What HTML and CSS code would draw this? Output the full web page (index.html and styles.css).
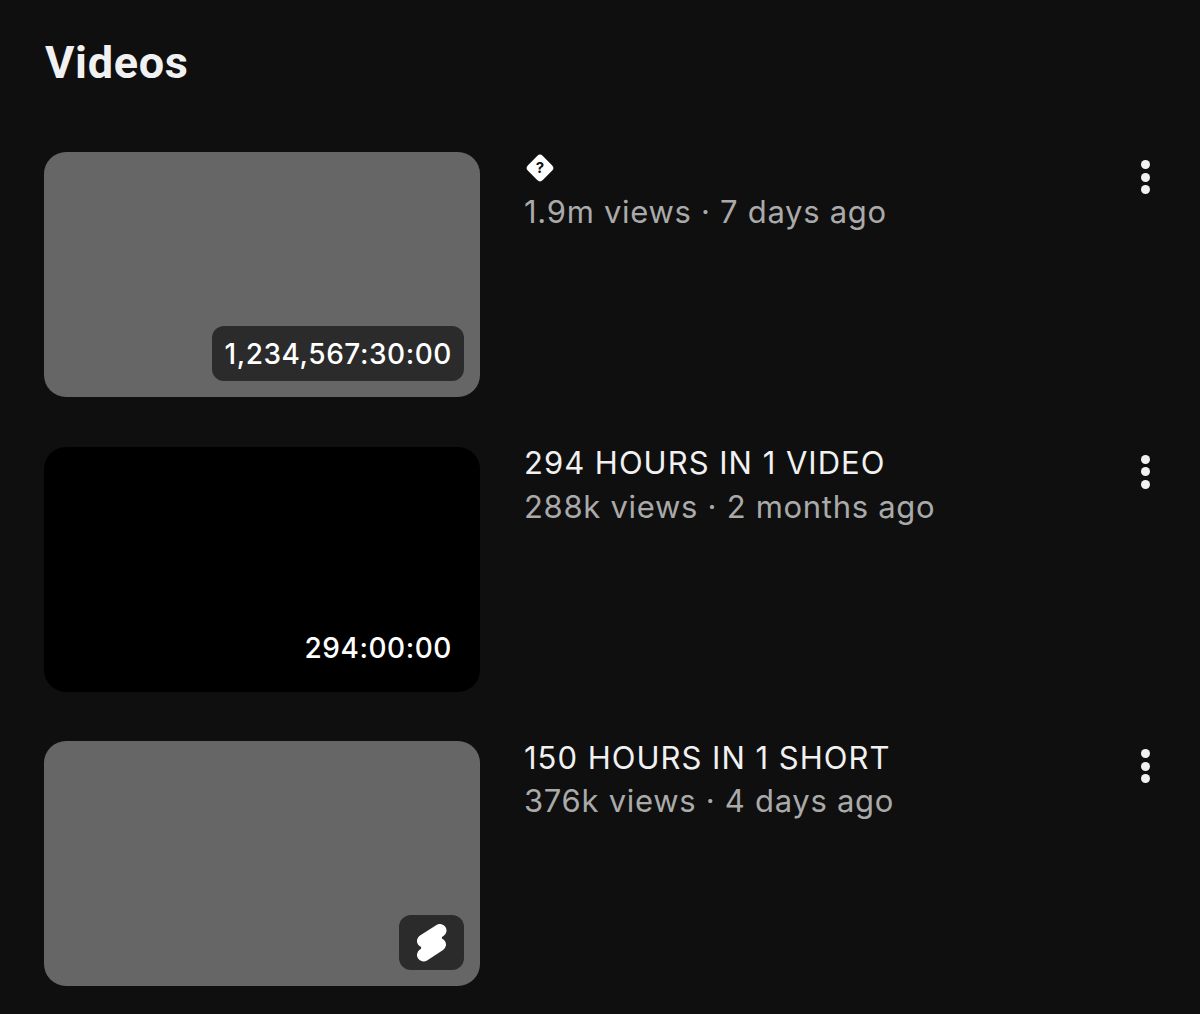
FILE: index.html
```html
<!DOCTYPE html>
<html lang="en">

<head>
    <meta charset="UTF-8">
    <meta name="viewport" content="width=device-width, initial-scale=1.0">
    <title>Videos</title>
    <link rel="stylesheet" href="styles.css">
</head>

<body>

    <h2 class="section-title">Videos</h2>

    <div class="video-list">
        <div class="video-row">
            <div class="thumb">
                <span class="badge">1,234,567:30:00</span>
            </div>
            <div class="video-info">
                <div class="video-title">
                    <svg class="unknown-icon" width="32" height="32" viewBox="0 0 32 32">
                        <rect x="5.5" y="5.5" width="21" height="21" rx="4" transform="rotate(45 16 16)" fill="#fff" />
                        <text x="16" y="21" text-anchor="middle" class="unknown-mark">?</text>
                    </svg>
                </div>
                <div class="video-meta">1.9m views · 7 days ago</div>
            </div>
            <div class="more"><span></span><span></span><span></span></div>
        </div>

        <div class="video-row">
            <div class="thumb thumb-black">
                <span class="badge badge-plain">294:00:00</span>
            </div>
            <div class="video-info">
                <div class="video-title">294 HOURS IN 1 VIDEO</div>
                <div class="video-meta">288k views · 2 months ago</div>
            </div>
            <div class="more"><span></span><span></span><span></span></div>
        </div>

        <div class="video-row">
            <div class="thumb">
                <span class="badge badge-short">
                    <svg width="30" height="38" viewBox="0 0 30 38" fill="none" stroke="#fff" stroke-linecap="round">
                        <path d="M6.5 17 L23 6.5" stroke-width="13" />
                        <path d="M6.5 31 L22.5 20.5" stroke-width="13" />
                        <path d="M9.5 24 L19.5 13.5" stroke-width="11" />
                    </svg>
                </span>
            </div>
            <div class="video-info">
                <div class="video-title">150 HOURS IN 1 SHORT</div>
                <div class="video-meta">376k views · 4 days ago</div>
            </div>
            <div class="more"><span></span><span></span><span></span></div>
        </div>
    </div>

</body>

</html>
```

FILE: styles.css
```css
html,
body {
    height: 100%;
    margin: 0;
    background-color: #0f0f0f;
    font-family: Inter, "Liberation Sans", sans-serif;
}

body {
    padding: 38px 0 0 44px;
    box-sizing: border-box;
    overflow: hidden;
}

.section-title {
    margin: 0 0 64px 1px;
    font-family: Roboto, "Liberation Sans", sans-serif;
    font-size: 45px;
    line-height: 50px;
    font-weight: 700;
    letter-spacing: 0.7px;
    color: #f1f1f1;
}

.video-list {
    display: flex;
    flex-direction: column;
    gap: 49.5px;
}

.video-row {
    display: flex;
    align-items: flex-start;
    height: 245px;
}

.thumb {
    position: relative;
    flex: none;
    width: 436px;
    height: 245px;
    border-radius: 22px;
    background: #666666;
}

.thumb-black {
    background: #000;
}

.badge {
    position: absolute;
    right: 16px;
    bottom: 16px;
    height: 55px;
    padding: 0 12px;
    display: flex;
    align-items: center;
    border-radius: 12px;
    background: #2b2b2b;
    color: #fff;
    font-size: 28px;
    font-weight: 500;
    letter-spacing: 0.55px;
}

.badge-plain {
    background: transparent;
}

.badge-short {
    width: 65px;
    padding: 0;
    justify-content: center;
}

.video-info {
    flex: 1;
    margin-left: 44px;
}

.video-title {
    height: 32px;
    display: flex;
    align-items: center;
    font-size: 31px;
    letter-spacing: 1px;
    color: #f1f1f1;
}

.unknown-mark {
    font-size: 15px;
    font-weight: 700;
    letter-spacing: 0;
    fill: #0f0f0f;
}

.video-meta {
    margin-top: 12px;
    font-size: 31px;
    line-height: 32px;
    letter-spacing: 0.7px;
    color: #aaaaaa;
}

.more {
    flex: none;
    width: 10px;
    margin: 8px 49px 0 0;
    display: flex;
    flex-direction: column;
    gap: 3.5px;
}

.more span {
    width: 9px;
    height: 9px;
    border-radius: 50%;
    background: #f1f1f1;
}
```
